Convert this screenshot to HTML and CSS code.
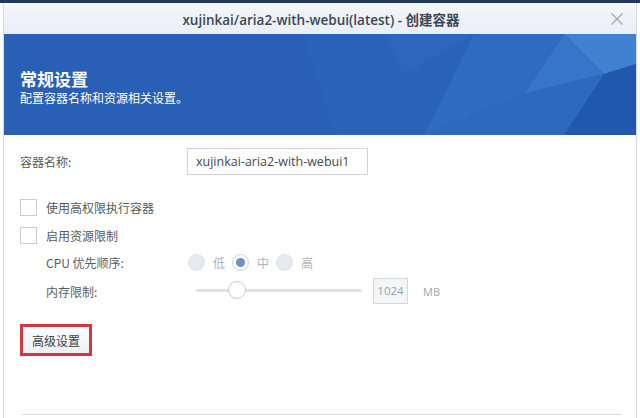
FILE: index.html
```html
<!DOCTYPE html>
<html lang="zh-CN">
<head>
    <meta charset="UTF-8">
    <meta name="viewport" content="width=device-width, initial-scale=1.0">
    <title>创建容器</title>
    <link rel="stylesheet" href="styles.css">
</head>
<body>
    <div class="topbar"></div>
    <div class="window">
        <div class="titlebar">
            <span class="title">xujinkai/aria2-with-webui(latest) - 创建容器</span>
            <svg class="close" width="12" height="12" viewBox="0 0 12 12">
                <path d="M0.5 0.5 L11.5 11.5 M11.5 0.5 L0.5 11.5" stroke="#a4a9b0" stroke-width="1.3" fill="none"/>
            </svg>
        </div>
        <div class="banner">
            <svg class="facets" width="632" height="101" viewBox="0 0 632 101" preserveAspectRatio="none">
                <polygon points="300,0 470,0 420,101 330,101" fill="#2b62b9"/>
                <polygon points="470,0 560,0 520,60 420,101" fill="#306bc2"/>
                <polygon points="560,0 632,0 632,30 600,40" fill="#4081d0"/>
                <polygon points="520,60 560,0 600,40" fill="#3675c8"/>
                <polygon points="600,40 632,30 632,101 560,101" fill="#2058ad"/>
                <polygon points="520,60 600,40 560,101 420,101" fill="#2c69bf"/>
                <polygon points="380,0 470,0 400,40" fill="#2f66bd"/>
            </svg>
            <div class="banner-text">
                <h1>常规设置</h1>
                <p>配置容器名称和资源相关设置。</p>
            </div>
        </div>
        <div class="content">
            <div class="row name-row">
                <label class="label">容器名称:</label>
                <div class="textbox">xujinkai-aria2-with-webui1</div>
            </div>
            <div class="row check-row first">
                <span class="checkbox"></span>
                <span class="check-label">使用高权限执行容器</span>
            </div>
            <div class="row check-row">
                <span class="checkbox"></span>
                <span class="check-label">启用资源限制</span>
            </div>
            <div class="row sub-row">
                <span class="sub-label">CPU 优先顺序:</span>
                <div class="radios">
                    <span class="radio"></span><span class="radio-text">低</span>
                    <span class="radio checked"></span><span class="radio-text">中</span>
                    <span class="radio"></span><span class="radio-text">高</span>
                </div>
            </div>
            <div class="row sub-row mem-row">
                <span class="sub-label">内存限制:</span>
                <div class="slider">
                    <div class="track"></div>
                    <div class="thumb"></div>
                </div>
                <div class="numbox">1024</div>
                <span class="unit">MB</span>
            </div>
            <button class="adv-button">高级设置</button>
            <div class="footer-line"></div>
        </div>
    </div>
</body>
</html>
```

FILE: styles.css
```css
body {
    margin: 0;
    background-color: #ffffff;
    font-family: "Noto Sans CJK SC", "Open Sans", sans-serif;
    height: 418px;
    overflow: hidden;
}
.topbar {
    height: 3px;
    background-color: #1d3a5e;
}
.window {
    margin: 0 3px 0 3px;
    border-left: 1px solid #d5d8dc;
    border-right: 1px solid #d5d8dc;
    height: 415px;
    box-sizing: border-box;
}
.titlebar {
    height: 31px;
    display: flex;
    align-items: center;
    justify-content: center;
    position: relative;
    background: linear-gradient(#f4f7fb, #e9eef5);
}
.title {
    font-family: "Open Sans", "Noto Sans CJK SC", sans-serif;
    font-weight: 600;
    font-size: 13.5px;
    color: #3c4654;
    margin-left: 2px;
}
.close {
    position: absolute;
    right: 13px;
    top: 10px;
}
.banner {
    height: 101px;
    background-color: #2a5fb6;
    position: relative;
    overflow: hidden;
}
.facets {
    position: absolute;
    left: 0;
    top: 0;
}
.banner-text {
    position: relative;
    padding: 33px 0 0 16px;
    color: #ffffff;
}
.banner-text h1 {
    margin: 0;
    font-size: 17px;
    font-weight: 700;
    line-height: 23px;
}
.banner-text p {
    margin: 0;
    font-size: 12px;
    line-height: 16px;
}
.content {
    padding: 13px 0 0 16px;
    position: relative;
    height: 282px;
    box-sizing: border-box;
}
.row {
    display: flex;
    align-items: center;
    font-size: 12px;
    color: #555a60;
}
.name-row {
    height: 27px;
}
.label {
    width: 167px;
}
.textbox {
    width: 181px;
    height: 27px;
    box-sizing: border-box;
    border: 1px solid #d0d4d9;
    font-family: "Open Sans", sans-serif;
    font-size: 12.5px;
    color: #444a52;
    line-height: 25px;
    padding-left: 8px;
}
.check-row {
    height: 28px;
}
.check-row.first {
    margin-top: 18px;
}
.checkbox {
    width: 17px;
    height: 17px;
    box-sizing: border-box;
    border: 1px solid #c9cdd2;
    background-color: #ffffff;
    margin-right: 9px;
}
.sub-row {
    height: 27px;
    padding-left: 26px;
}
.sub-label {
    width: 142px;
    color: #5a5f66;
}
.radios {
    display: flex;
    align-items: center;
}
.radio {
    width: 17px;
    height: 17px;
    border-radius: 50%;
    box-sizing: border-box;
    border: 1px solid #dde2e8;
    background-color: #e6eaf0;
    position: relative;
}
.radio.checked {
    background-color: #ffffff;
    border-color: #c6d3e6;
}
.radio.checked::after {
    content: "";
    position: absolute;
    left: 3px;
    top: 3px;
    width: 9px;
    height: 9px;
    border-radius: 50%;
    background-color: #6d91c8;
}
.radio-text {
    color: #b0b4ba;
    margin: 0 7px 0 8px;
}
.mem-row {
    height: 30px;
}
.slider {
    width: 166px;
    height: 20px;
    position: relative;
    margin-left: 8px;
}
.track {
    position: absolute;
    left: 0;
    right: 0;
    top: 8px;
    height: 3px;
    background-color: #dfe3e8;
    border-radius: 2px;
}
.thumb {
    position: absolute;
    left: 32px;
    top: 0;
    width: 18px;
    height: 18px;
    border-radius: 50%;
    box-sizing: border-box;
    border: 1px solid #c4cad2;
    background-color: #ffffff;
}
.numbox {
    margin-left: 11px;
    width: 35px;
    height: 26px;
    box-sizing: border-box;
    border: 1px solid #d3d7dc;
    background-color: #f3f5f8;
    font-family: "Open Sans", sans-serif;
    font-size: 11.5px;
    color: #9a9fa6;
    line-height: 24px;
    text-align: center;
}
.unit {
    margin-left: 15px;
    font-family: "Open Sans", sans-serif;
    font-size: 11px;
    color: #a4a8ae;
}
.adv-button {
    display: block;
    margin-top: 18px;
    width: 72px;
    height: 32px;
    border: 3px solid #d13840;
    background: linear-gradient(#fbfcfd, #eef1f4);
    font-family: "Noto Sans CJK SC", sans-serif;
    font-size: 12px;
    color: #3a3f45;
    padding: 0;
}
.footer-line {
    position: absolute;
    left: 18px;
    right: 15px;
    bottom: 2px;
    height: 1px;
    background-color: #d8dbde;
}
```
